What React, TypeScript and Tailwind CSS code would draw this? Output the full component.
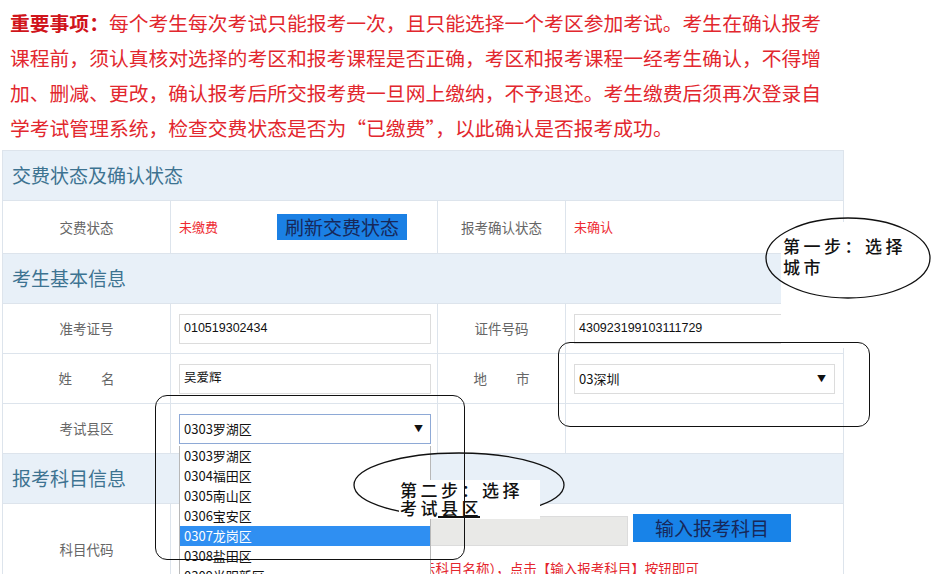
const districts = [
  '0303罗湖区',
  '0304福田区',
  '0305南山区',
  '0306宝安区',
  '0307龙岗区',
  '0308盐田区',
  '0309光明新区',
  '0310坪山新区',
]

function Label({ text, spread }: { text: string; spread?: boolean }) {
  if (spread) {
    return (
      <div className="mx-auto flex w-[56px] justify-between text-[13.5px] text-[#666]">
        <span>{text[0]}</span>
        <span>{text[1]}</span>
      </div>
    )
  }
  return <div className="text-center text-[13.5px] text-[#666]">{text}</div>
}

function Header({ title }: { title: string }) {
  return (
    <div className="flex h-[50px] items-center border-b border-[#dde4ec] bg-[#e8f0f8] pl-[9px] text-[19px] text-[#3d7391]">
      {title}
    </div>
  )
}

function TextBox({ value, width }: { value: string; width: string }) {
  return (
    <div
      className={`flex h-[30px] items-center border border-[#dcdcdc] bg-white pl-[4px] font-['Liberation_Sans','Noto_Sans_CJK_SC',sans-serif] text-[12.5px] text-[#111] ${width}`}
    >
      {value}
    </div>
  )
}

export default function App() {
  return (
    <div className="relative h-[574px] w-[936px] overflow-hidden bg-white font-['Noto_Sans_CJK_SC',sans-serif]">
      {/* notice */}
      <div className="pl-[10px] pt-[5px] text-[19.8px] leading-[35px] text-[#e2272e]">
        <div>
          <span className="font-bold text-[#d0141b]">重要事项：</span>
          每个考生每次考试只能报考一次，且只能选择一个考区参加考试。考生在确认报考
        </div>
        <div>课程前，须认真核对选择的考区和报考课程是否正确，考区和报考课程一经考生确认，不得增</div>
        <div>加、删减、更改，确认报考后所交报考费一旦网上缴纳，不予退还。考生缴费后须再次登录自</div>
        <div>学考试管理系统，检查交费状态是否为“已缴费”，以此确认是否报考成功。</div>
      </div>

      {/* table */}
      <div className="ml-[2px] mt-[5px] w-[842px] border-x border-t border-[#dde4ec]">
        <Header title="交费状态及确认状态" />
        <div className="flex h-[53px] border-b border-[#dde4ec]">
          <div className="flex w-[168px] items-center justify-center border-r border-[#dde4ec]">
            <Label text="交费状态" />
          </div>
          <div className="flex w-[267px] items-center border-r border-[#dde4ec] pl-[8px]">
            <span className="text-[13px] text-[#ee2b33]">未缴费</span>
            <button className="ml-[59px] h-[26px] w-[130px] bg-[#1b80e4] text-[19px] leading-[26px] text-[#17285a]">
              刷新交费状态
            </button>
          </div>
          <div className="flex w-[128px] items-center justify-center border-r border-[#dde4ec]">
            <Label text="报考确认状态" />
          </div>
          <div className="flex flex-1 items-center pl-[8px] text-[13px] text-[#ee2b33]">未确认</div>
        </div>

        <Header title="考生基本信息" />
        <div className="flex h-[50px] border-b border-[#dde4ec]">
          <div className="flex w-[168px] items-center justify-center border-r border-[#dde4ec]">
            <Label text="准考证号" />
          </div>
          <div className="flex w-[267px] items-center border-r border-[#dde4ec] pl-[8px]">
            <TextBox value="010519302434" width="w-[252px]" />
          </div>
          <div className="flex w-[128px] items-center justify-center border-r border-[#dde4ec]">
            <Label text="证件号码" />
          </div>
          <div className="flex flex-1 items-center pl-[8px]">
            <TextBox value="430923199103111729" width="w-[261px]" />
          </div>
        </div>
        <div className="flex h-[50px] border-b border-[#dde4ec]">
          <div className="flex w-[168px] items-center border-r border-[#dde4ec]">
            <Label text="姓名" spread />
          </div>
          <div className="flex w-[267px] items-center border-r border-[#dde4ec] pl-[8px]">
            <TextBox value="吴爱辉" width="w-[252px]" />
          </div>
          <div className="flex w-[128px] items-center border-r border-[#dde4ec]">
            <Label text="地市" spread />
          </div>
          <div className="flex flex-1 items-center pl-[8px]">
            <div className="flex h-[30px] w-[261px] items-center justify-between border border-[#dcdcdc] bg-white px-[4px] text-[13px] text-[#111]">
              <span>03深圳</span>
              <span className="pr-[4px] text-[9px]">▼</span>
            </div>
          </div>
        </div>
        <div className="flex h-[50px] border-b border-[#dde4ec]">
          <div className="flex w-[168px] items-center justify-center border-r border-[#dde4ec]">
            <Label text="考试县区" />
          </div>
          <div className="flex w-[267px] items-center border-r border-[#dde4ec] pl-[8px]">
            <div className="flex h-[30px] w-[252px] items-center justify-between border border-[#8ea9d6] bg-white px-[4px] text-[13px] text-[#111]">
              <span>0303罗湖区</span>
              <span className="pr-[3px] text-[9px]">▼</span>
            </div>
          </div>
          <div className="w-[128px] border-r border-[#dde4ec]" />
          <div className="flex-1" />
        </div>

        <Header title="报考科目信息" />
        <div className="flex h-[90px]">
          <div className="flex w-[168px] items-center justify-center border-r border-[#dde4ec]">
            <Label text="科目代码" />
          </div>
          <div className="flex-1 pl-[8px] pt-[10px]">
            <div className="flex items-start">
              <div className="mt-[2px] h-[30px] w-[449px] border border-[#dcdcdc] bg-[#e9e9e7]" />
              <button className="ml-[5px] h-[28px] w-[158px] bg-[#1883e8] text-[19px] leading-[28px] text-[#17285a]">
                输入报考科目
              </button>
            </div>
            <div className="mt-[12px] text-[13.5px] text-[#e4262d]">
              请先输入科目代码按回车键（系统自动显示科目名称），点击【输入报考科目】按钮即可
            </div>
          </div>
        </div>
      </div>

      {/* open dropdown list */}
      <div className="absolute left-[179px] top-[446px] w-[252px] border-x border-[#b8b8b8] bg-white text-[13px] text-[#111]">
        {districts.map((d) => (
          <div
            key={d}
            className={`h-[20px] pl-[4px] leading-[20px] ${d === '0307龙岗区' ? 'bg-[#2f8ff2] text-white' : ''}`}
          >
            {d}
          </div>
        ))}
      </div>

      {/* step 1 annotation */}
      <div className="absolute left-[781px] top-[222px] h-[126px] w-[155px] bg-white" />
      <svg className="absolute left-[763px] top-[215px]" width="170" height="86">
        <ellipse cx="85" cy="43" rx="82" ry="40" fill="none" stroke="#111" strokeWidth="1.3" />
      </svg>
      <div className="absolute left-[783px] top-[235px] text-[17px] font-medium leading-[21px] tracking-[3.5px] text-[#111]">
        <div>第一步：选择</div>
        <div>城市</div>
      </div>

      {/* step 2 annotation */}
      <svg className="absolute left-[352px] top-[451px]" width="214" height="68">
        <ellipse cx="107" cy="34" rx="105" ry="32" fill="none" stroke="#111" strokeWidth="1.3" />
      </svg>
      <div className="absolute left-[399px] top-[480px] h-[39px] w-[141px] bg-white" />
      <div className="absolute left-[400px] top-[481px] text-[17px] font-medium leading-[18px] tracking-[3.5px] text-[#111]">
        <div>第二步：选择</div>
        <div>考试县区</div>
      </div>
      <div className="absolute left-[438px] top-[516px] h-[1.5px] w-[42px] bg-[#111]" />

      {/* highlight boxes */}
      <div className="absolute left-[558px] top-[342px] h-[85px] w-[312px] rounded-[12px] border-[1.5px] border-[#111]" />
      <div className="absolute left-[155px] top-[395px] h-[165px] w-[310px] rounded-[12px] border-[1.5px] border-[#111]" />
    </div>
  )
}
